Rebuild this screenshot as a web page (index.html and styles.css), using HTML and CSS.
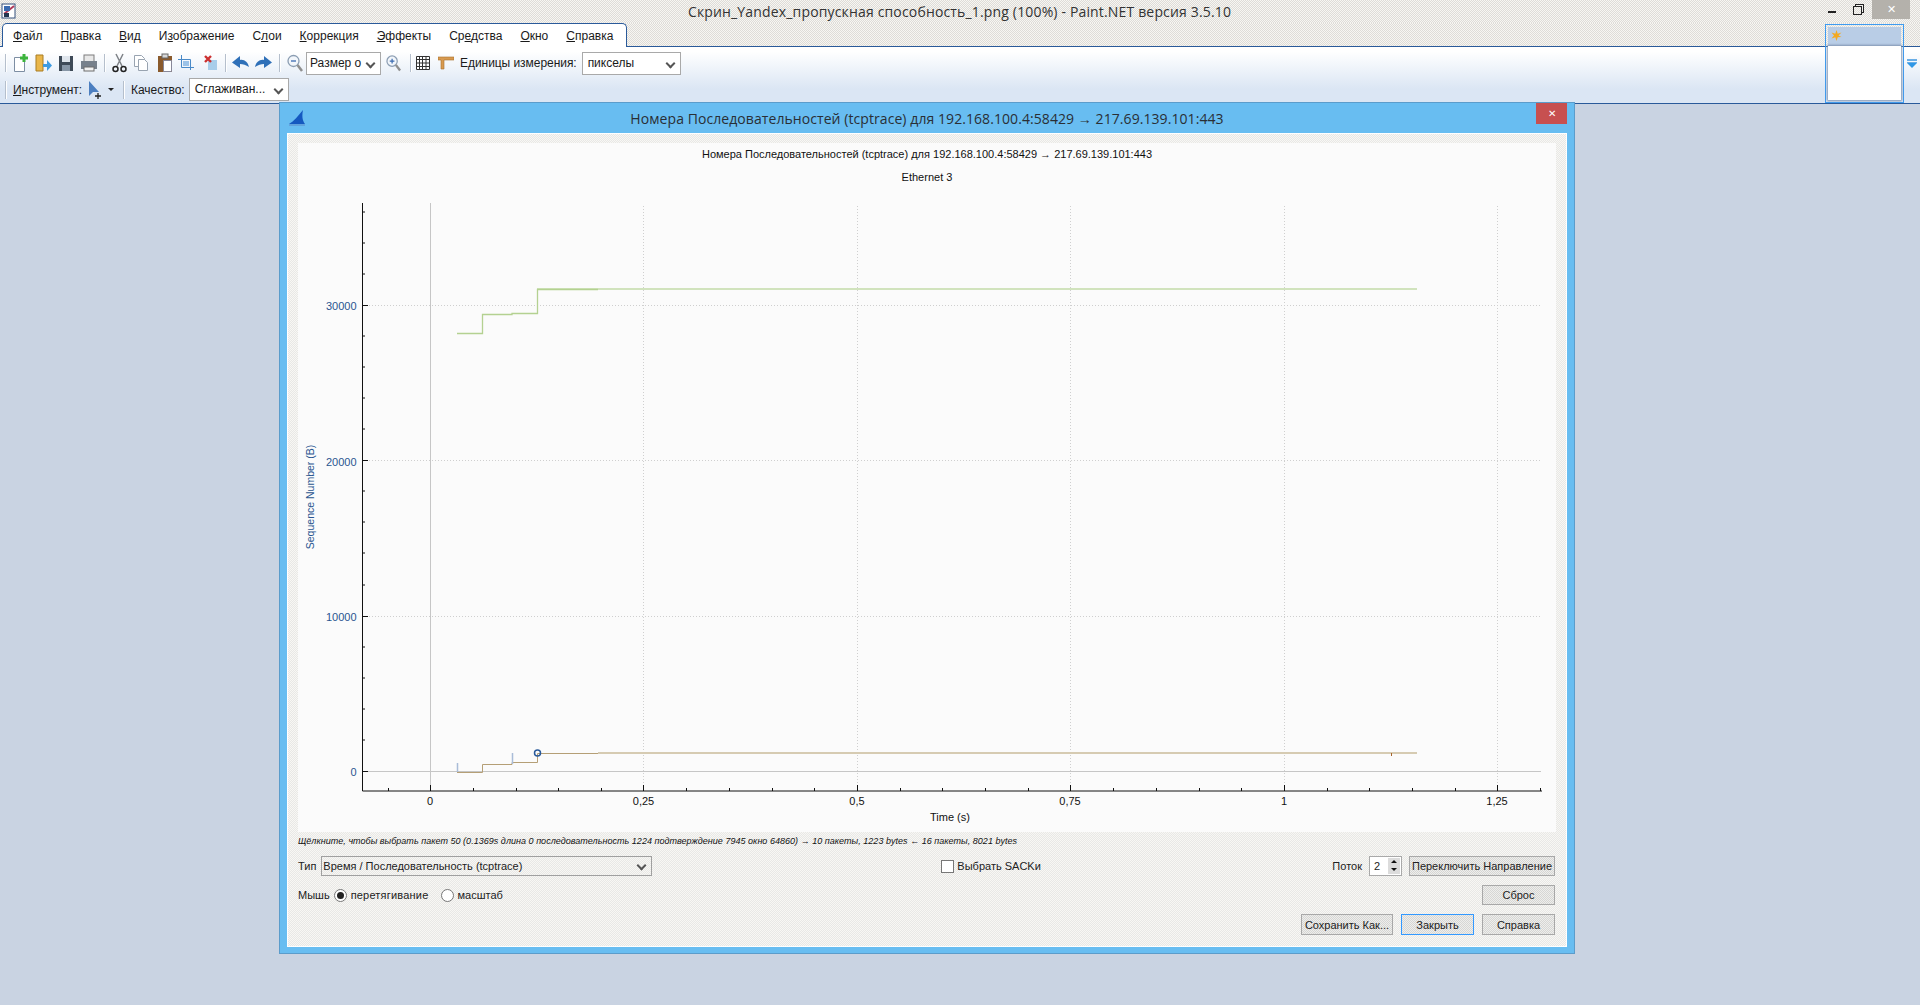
FILE: index.html
```html
<!DOCTYPE html>
<html lang="ru">
<head>
    <meta charset="UTF-8">
    <title>Paint.NET</title>
    <link rel="stylesheet" href="styles.css">
</head>
<body>

    <!-- window frame -->
    <header class="titlebar">
        <svg class="app-icon" width="16" height="16" viewBox="0 0 16 16"><rect x="1" y="1" width="13" height="14" fill="#fff" stroke="#34507c"/><path d="M3 11 L13 3" stroke="#b03a5a" stroke-width="2"/><rect x="3" y="3" width="6" height="5" fill="#3a6ab0"/><rect x="3" y="10" width="5" height="4" fill="#22344f"/></svg>
        <span class="titlebar-text">Скрин_Yandex_пропускная способность_1.png (100%) - Paint.NET версия 3.5.10</span>
        <div class="win-controls">
            <span class="win-min"></span>
            <span class="win-restore"></span>
            <span class="win-close">✕</span>
        </div>
    </header>

    <nav class="menu-row">
        <ul class="menu">
            <li><u>Ф</u>айл</li>
            <li><u>П</u>равка</li>
            <li><u>В</u>ид</li>
            <li>И<u>з</u>ображение</li>
            <li>С<u>л</u>ои</li>
            <li><u>К</u>оррекция</li>
            <li><u>Э</u>ффекты</li>
            <li>Ср<u>е</u>дства</li>
            <li><u>О</u>кно</li>
            <li><u>С</u>правка</li>
        </ul>
    </nav>

    <section class="toolbars">
        <div class="tool-row">
            <i class="sep"></i>
            <svg class="ic" width="16" height="20" viewBox="0 0 16 20"><path d="M1.500 4.500h10v14h-10z" fill="#fff" stroke="#7d8ea3"/><path d="M11 1v8M7 5h8" stroke="#3cb43c" stroke-width="3"/></svg>
            <svg class="ic" width="17" height="20" viewBox="0 0 17 20"><path d="M1 2h7v16H1z" fill="#e9b64a" stroke="#a97d22"/><path d="M8 11h4V7l5 5.500-5 5.500v-4H8z" fill="#3f9be0"/></svg>
            <svg class="ic" width="16" height="20" viewBox="0 0 16 20"><rect x="1" y="3" width="14" height="15" fill="#3e4a57"/><rect x="4" y="3" width="8" height="6" fill="#dfe5ec"/><rect x="4" y="12" width="8" height="6" fill="#8796a6"/></svg>
            <svg class="ic" width="18" height="20" viewBox="0 0 18 20"><rect x="4" y="2" width="10" height="8" fill="#e8e8e8" stroke="#7d7d7d"/><rect x="1" y="8" width="16" height="8" fill="#77818c"/><rect x="4" y="14" width="10" height="4" fill="#f2f2f2" stroke="#6d6d6d"/></svg>
            <i class="sep"></i>
            <svg class="ic" width="15" height="20" viewBox="0 0 15 20"><path d="M4 1l6 12M11 1L5 13" stroke="#7f8388" stroke-width="1.500" fill="none"/><circle cx="3.500" cy="16" r="2.500" fill="none" stroke="#222" stroke-width="1.500"/><circle cx="11.500" cy="16" r="2.500" fill="none" stroke="#222" stroke-width="1.500"/></svg>
            <svg class="ic" width="16" height="20" viewBox="0 0 16 20"><path d="M1.500 2.500h7l3 3v8h-10z" fill="#fff" stroke="#98a3b0"/><path d="M5.500 6.500h6l3 3v8h-9z" fill="#fff" stroke="#98a3b0"/></svg>
            <svg class="ic push3" width="14" height="20" viewBox="0 0 14 20"><rect x="0" y="3" width="14" height="16" fill="#8a5a2c"/><rect x="4" y="1" width="6" height="4" fill="#d8d8d8" stroke="#666"/><path d="M5.500 7.500h8v11h-8z" fill="#fff" stroke="#889"/></svg>
            <svg class="ic" width="16" height="20" viewBox="0 0 16 20"><path d="M0 6.500h12.500V17M3.500 2v12.500H16" fill="none" stroke="#4a8ac8"/><rect x="5" y="8" width="6" height="5" fill="#9cc3e8"/></svg>
            <svg class="ic push4" width="13" height="20" viewBox="0 0 13 20"><rect x="4" y="7" width="9" height="10" fill="#a8cdea"/><path d="M1 3l6 6M7 3L1 9" stroke="#cc3030" stroke-width="2.400"/></svg>
            <i class="sep push2"></i>
            <svg class="ic pull2" width="18" height="20" viewBox="0 0 18 20"><path d="M18 14c-1-5-5-8-9-7V3L1 9.500 9 15v-4c3 0 6 1 9 3z" fill="#2f70b8"/></svg>
            <svg class="ic" width="18" height="20" viewBox="0 0 18 20"><path d="M0 14c1-5 5-8 9-7V3l8 6.500L9 15v-4c-3 0-6 1-9 3z" fill="#2f70b8"/></svg>
            <i class="sep"></i>
            <svg class="ic" width="16" height="20" viewBox="0 0 16 20"><circle cx="6.500" cy="8" r="5.500" fill="#f2f6fb" stroke="#8b9db2" stroke-width="1.300"/><path d="M10.500 12l4.500 6" stroke="#8f8f8f" stroke-width="2.500"/><path d="M4 8h5" stroke="#3a6ab0" stroke-width="1.300"/></svg>
            <div class="combo combo-size">Размер о</div>
            <svg class="ic" width="15" height="20" viewBox="0 0 16 20"><circle cx="6.500" cy="8" r="5.500" fill="#f2f6fb" stroke="#8b9db2" stroke-width="1.300"/><path d="M10.500 12l4.500 6" stroke="#8f8f8f" stroke-width="2.500"/><path d="M4 8h5M6.500 5.500v5" stroke="#3a6ab0" stroke-width="1.300"/></svg>
            <i class="sep push3"></i>
            <svg class="ic pull2" width="14" height="20" viewBox="0 0 14 20"><path d="M.5 3.500h13v13H.5zM3.500 3.500v13M6.500 3.500v13M10 3.500v13M.5 6.500h13M.5 10h13M.5 13.500h13" fill="#fff" stroke="#333"/></svg>
            <svg class="ic push2" width="16" height="20" viewBox="0 0 16 20"><path d="M0 4h16v3H6v9H3V7H0z" fill="#d89a50" stroke="#a86e2c" stroke-width=".6"/></svg>
            <span class="tool-label">Единицы измерения:</span>
            <div class="combo combo-units">пикселы</div>
        </div>
        <div class="tool-row">
            <i class="sep"></i>
            <span class="tool-label"><u>И</u>нструмент:</span>
            <svg class="ic" width="14" height="20" viewBox="0 0 14 20"><path d="M1 1v15l4-4h6z" fill="#4c7fc0"/><path d="M10 13v6M7 16h6" stroke="#222" stroke-width="1.300"/></svg>
            <span class="caret"></span>
            <i class="sep"></i>
            <span class="tool-label">Качество:</span>
            <div class="combo combo-quality">Сглаживан...</div>
        </div>
    </section>

    <!-- floating thumbnails -->
    <div class="thumb">
        <div class="thumb-head"><svg width="11" height="11" viewBox="0 0 11 11"><path d="M5.500 0l1.200 3.800L10.500 2.500 7.500 5.500l3 1.500-3.800.3L5.500 11 4.300 7.300.5 8.500l2.500-3L.5 2.500l3.800 1.300z" fill="#f4a91f"/></svg></div>
        <div class="thumb-page"></div>
    </div>
    <svg class="chevron" width="10" height="9" viewBox="0 0 10 9"><path d="M0 0h10v2H0zM0 3h10v1H0z" fill="#6aaee6"/><path d="M0 4h10L5 9z" fill="#2f97e6"/></svg>

    <main class="workspace">
        <div class="dialog">
            <div class="dialog-title">
                <svg class="shark" width="18" height="16" viewBox="0 0 18 16"><path d="M1 14C6 11 10 6 15 0c-1 5-1 10 2 14z" fill="#1559c0"/><path d="M1 15h16" stroke="#5b88c8"/></svg>
                <span>Номера Последовательностей (tcptrace) для 192.168.100.4:58429 → 217.69.139.101:443</span>
                <span class="dialog-close">✕</span>
            </div>
            <div class="dialog-body">
                <svg class="plot" width="1258" height="689" viewBox="298 143 1258 689">
                    <text class="plot-title" x="927" y="158">Номера Последовательностей (tcptrace) для 192.168.100.4:58429 → 217.69.139.101:443</text>
                    <text class="plot-title" x="927" y="181">Ethernet 3</text>

                    <!-- grid -->
                    <path class="grid" d="M363 305.500H1541M363 460.500H1541M363 616.500H1541M643.500 206V790M857.500 206V790M1070.500 206V790M1284.500 206V790M1497.500 206V790"/>
                    <path class="zero" d="M363 771.500H1541M430.500 203V790"/>

                    <!-- axes -->
                    <path class="axis" d="M362.500 203V791H1542"/>
                    <path class="axis" d="M362 212H365M362 243H365M362 274H365M362 336H365M362 367H365M362 398H365M362 429H365M362 491H365M362 522H365M362 553H365M362 585H365M362 647H365M362 678H365M362 709H365M362 740H365"/>
                    <path class="axis" d="M362 305.500H368M362 460.500H368M362 616.500H368M362 771.500H368"/>
                    <path class="axis" d="M388.500 791V788M473.500 791V788M516.500 791V788M558.500 791V788M601.500 791V788M686.500 791V788M729.500 791V788M772.500 791V788M814.500 791V788M900.500 791V788M942.500 791V788M985.500 791V788M1028.500 791V788M1113.500 791V788M1156.500 791V788M1199.500 791V788M1241.500 791V788M1327.500 791V788M1369.500 791V788M1412.500 791V788M1455.500 791V788M1540.500 791V788"/>
                    <path class="axis" d="M430.500 791V785M643.500 791V785M857.500 791V785M1070.500 791V785M1284.500 791V785M1497.500 791V785"/>

                    <!-- series -->
                    <path class="win-band" d="M537 289H1417"/>
                    <path class="win-line" d="M457 333.500H482.500V314.500H512V313.500H537.500V289.500H598"/>
                    <path class="seq-band" d="M598 753H1417"/>
                    <path class="seq-line" d="M457 772.500H482.500V764.500H512V762.500H537.500V753.500H598"/>
                    <path class="ack-tick" d="M457.500 763V772M512.500 753V764"/>
                    <path class="seq-tick" d="M1391.500 753V756"/>
                    <circle class="marker" cx="537.500" cy="753" r="3"/>

                    <!-- labels -->
                    <text class="y-num" x="356.500" y="310">30000</text>
                    <text class="y-num" x="356.500" y="466">20000</text>
                    <text class="y-num" x="356.500" y="621">10000</text>
                    <text class="y-num" x="356.500" y="776">0</text>
                    <text class="y-title" transform="translate(314 497) rotate(-90)">Sequence Number (B)</text>
                    <text class="x-num" x="430" y="805">0</text>
                    <text class="x-num" x="643.500" y="805">0,25</text>
                    <text class="x-num" x="857" y="805">0,5</text>
                    <text class="x-num" x="1070" y="805">0,75</text>
                    <text class="x-num" x="1284" y="805">1</text>
                    <text class="x-num" x="1497" y="805">1,25</text>
                    <text class="x-num" x="950" y="821">Time (s)</text>
                </svg>

                <p class="hint">Щёлкните, чтобы выбрать пакет 50 (0.1369s длина 0 последовательность 1224 подтверждение 7945 окно 64860) → 10 пакеты, 1223 bytes ← 16 пакеты, 8021 bytes</p>

                <div class="ctrl-row ctrl-row1">
                    <span class="ctrl-label">Тип</span>
                    <div class="combo combo-type">Время / Последовательность (tcptrace)</div>
                    <span class="check"></span>
                    <span>Выбрать SACKи</span>
                    <span class="ctrl-stream">Поток</span>
                    <div class="spin"><span>2</span><span class="spin-btns"><b></b><b></b></span></div>
                    <button class="btn btn-switch">Переключить Направление</button>
                </div>

                <div class="ctrl-row ctrl-row2">
                    <span class="ctrl-label">Мышь</span>
                    <span class="radio radio-on"></span>
                    <span class="radio-text">перетягивание</span>
                    <span class="radio radio-two"></span>
                    <span>масштаб</span>
                    <button class="btn btn-small btn-right">Сброс</button>
                </div>

                <div class="ctrl-row ctrl-row3">
                    <button class="btn btn-save btn-right">Сохранить Как...</button>
                    <button class="btn btn-small btn-focus">Закрыть</button>
                    <button class="btn btn-small">Справка</button>
                </div>
            </div>
        </div>
    </main>

</body>
</html>
```

FILE: styles.css
```css
* {
    box-sizing: border-box;
}

body {
    margin: 0;
    height: 1005px;
    overflow: hidden;
    font-family: "Liberation Sans", Arial, sans-serif;
    font-size: 12px;
    color: #1a1a1a;
    background: #c9d3e2;
    display: flex;
    flex-direction: column;
    position: relative;
}

/* title bar + menu share the dithered frame colour */
.titlebar {
    height: 23px;
    flex: none;
    display: flex;
    align-items: center;
    justify-content: center;
    position: relative;
    background: #f1f0ec;
    background-image: repeating-conic-gradient(#dedcd8 0 25%, #f7f6f2 0 50%);
    background-size: 2px 2px;
}

.app-icon {
    position: absolute;
    left: 1px;
    top: 3px;
}

.titlebar-text {
    font-family: "Open Sans", sans-serif;
    font-size: 14px;
    color: #333;
    margin-left: -1px;
    letter-spacing: .16px;
}

.win-controls {
    position: absolute;
    right: 10px;
    top: 0;
    display: flex;
    align-items: flex-start;
}

.win-min {
    width: 8px;
    height: 2px;
    background: #222;
    margin: 11px 17px 0 0;
}

.win-restore {
    width: 9px;
    height: 9px;
    border: 1px solid #222;
    box-shadow: 2px -2px 0 -1px #f1f0ec, 2px -2px 0 0 #222;
    margin: 6px 10px 0 0;
}

.win-close {
    width: 38px;
    height: 19px;
    background: #b4b1ab;
    color: #fff;
    text-align: center;
    font-size: 11px;
    line-height: 19px;
}

.menu-row {
    height: 24px;
    flex: none;
    padding-left: 2px;
    background: #f1f0ec;
    background-image: repeating-conic-gradient(#dedcd8 0 25%, #f7f6f2 0 50%);
    background-size: 2px 2px;
    border-bottom: 1px solid #2a5a9a;
}

.menu {
    list-style: none;
    margin: 0;
    padding: 0 10px;
    width: 625px;
    height: 24px;
    display: flex;
    gap: 18px;
    align-items: center;
    background: #fff;
    border: 1px solid #2a5a9a;
    border-bottom: none;
    border-radius: 5px 5px 0 0;
    position: relative;
    z-index: 1;
}

.toolbars {
    height: 57px;
    flex: none;
    background: linear-gradient(#fff 0, #fff 8%, #dbe6f4 75%, #dbe6f4 100%);
    border-bottom: 1px solid #2a5a9a;
    display: flex;
    flex-direction: column;
}

.tool-row {
    height: 27px;
    margin-top: 3px;
    display: flex;
    align-items: center;
    padding-left: 5px;
    gap: 6px;
}

.tool-row + .tool-row {
    margin-top: 0;
}

.sep {
    width: 2px;
    height: 18px;
    background: #fff;
    border-left: 1px solid #b5bfcc;
}

.ic {
    flex: none;
}

.push2 {
    margin-left: 2px;
}

.push3 {
    margin-left: 3px;
}

.push4 {
    margin-left: 4px;
}

.pull2 {
    margin-left: -2px;
}

.tool-label {
    font-size: 12px;
    white-space: nowrap;
    letter-spacing: -.05px;
}

.combo {
    height: 23px;
    flex: none;
    padding-left: 3px;
    line-height: 21px;
    background: #fff;
    border: 1px solid #a9a9a9;
    position: relative;
    overflow: hidden;
}

.combo::after {
    content: "";
    position: absolute;
    right: 6px;
    top: 7px;
    width: 5px;
    height: 5px;
    border-right: 2px solid #555;
    border-bottom: 2px solid #555;
    transform: rotate(45deg);
}

.combo-size {
    width: 75px;
    margin: 0 -1px 0 -3px;
}

.combo-units {
    width: 99px;
    margin-left: -1px;
    padding-left: 5px;
}

.combo-quality {
    width: 100px;
    margin-left: -2px;
    padding-left: 5px;
}

.caret {
    width: 0;
    height: 0;
    margin-right: 3px;
    border: 3px solid transparent;
    border-top: 3px solid #222;
    border-bottom: none;
}

.thumb {
    position: absolute;
    left: 1825px;
    top: 24px;
    width: 79px;
    height: 79px;
    border: 1px solid #3d9bf0;
    padding: 2px;
    z-index: 3;
}

.thumb-head {
    height: 19px;
    background: #b9cde6;
    padding: 3px 0 0 3px;
}

.thumb-head svg {
    display: block;
}

.thumb-page {
    height: 54px;
    background: #fff;
    box-shadow: 0 0 2px 1px #7f93b0;
}

.chevron {
    position: absolute;
    left: 1907px;
    top: 59px;
}

.workspace {
    flex: 1;
    padding-left: 279px;
}

.dialog {
    width: 1296px;
    height: 852px;
    margin-top: -2px;
    position: relative;
    z-index: 2;
    background: #68bdf1;
    border: 1px solid #5b9ccb;
    padding: 0 7px 7px;
}

.dialog-title {
    height: 30px;
    display: flex;
    align-items: center;
    justify-content: center;
    position: relative;
    font-family: "Open Sans", sans-serif;
    font-size: 14px;
    color: #2a2f35;
    letter-spacing: .07px;
}

.shark {
    position: absolute;
    left: 1px;
    top: 7px;
}

.dialog-close {
    position: absolute;
    right: 0;
    top: 0;
    width: 31px;
    height: 21px;
    background: #c75050;
    color: #fff;
    font-size: 10px;
    line-height: 21px;
    text-align: center;
    letter-spacing: 0;
}

.dialog-body {
    height: 814px;
    padding: 9px 11px 0 10px;
    background: #f0f0ec;
    background-image: repeating-conic-gradient(#e8e8e6 0 25%, #f8f7f4 0 50%);
    background-size: 2px 2px;
    border: 1px solid #fff;
    font-size: 11px;
    color: #222;
}

.plot {
    display: block;
    background: #fbfbfb;
}

.plot text {
    font-family: "Liberation Sans", Arial, sans-serif;
    font-size: 11px;
    fill: #111;
}

.plot .plot-title,
.plot .x-num {
    text-anchor: middle;
}

.plot .y-num {
    text-anchor: end;
    fill: #2a5590;
}

.plot .y-title {
    text-anchor: middle;
    fill: #2a5590;
    font-size: 10.500px;
}

.grid {
    fill: none;
    stroke: #cfcfcf;
    stroke-dasharray: 1 2;
}

.zero {
    fill: none;
    stroke: #c6c6c6;
}

.axis {
    fill: none;
    stroke: #111;
}

.win-line {
    fill: none;
    stroke: #b4d191;
    stroke-width: 1.300;
}

.win-band {
    fill: none;
    stroke: #c3dba8;
    stroke-width: 1.500;
}

.seq-line {
    fill: none;
    stroke: #b59f76;
}

.seq-band {
    fill: none;
    stroke: #d6cbb2;
    stroke-width: 2;
}

.ack-tick {
    fill: none;
    stroke: #a9bcd8;
    stroke-width: 1.500;
}

.seq-tick {
    fill: none;
    stroke: #a5632a;
}

.marker {
    fill: none;
    stroke: #2a5a9a;
    stroke-width: 1.500;
}

.hint {
    margin: 3px 0 0;
    height: 13px;
    font-style: italic;
    font-size: 9px;
    letter-spacing: .03px;
    line-height: 13px;
    white-space: nowrap;
    color: #111;
}

.ctrl-row {
    display: flex;
    align-items: center;
    height: 20px;
}

.ctrl-row1 {
    margin-top: 8px;
}

.ctrl-row2 {
    margin-top: 9px;
}

.ctrl-row3 {
    margin-top: 9px;
    height: 21px;
}

.ctrl-label {
    margin-right: 5px;
}

.combo-type {
    width: 331px;
    height: 20px;
    line-height: 18px;
    padding-left: 1px;
    background: transparent;
    border-color: #a0a0a0;
}

.combo-type::after {
    top: 5px;
}

.check {
    width: 13px;
    height: 13px;
    margin: 0 3px 0 289px;
    background: #fff;
    border: 1px solid #777;
}

.ctrl-stream {
    margin-left: auto;
    margin-right: 7px;
}

.spin {
    width: 33px;
    height: 20px;
    border: 1px solid #a9a9a9;
    background: #fff;
    padding-left: 4px;
    line-height: 18px;
    position: relative;
    margin-right: 7px;
}

.spin-btns {
    position: absolute;
    right: 1px;
    top: 1px;
    bottom: 1px;
    width: 12px;
    display: flex;
    flex-direction: column;
    background: #dcdcdc;
}

.spin-btns b {
    flex: 1;
    position: relative;
}

.spin-btns b::after {
    content: "";
    position: absolute;
    left: 3px;
    top: 2px;
    border: 3px solid transparent;
    border-bottom: 3px solid #111;
    border-top: none;
}

.spin-btns b + b::after {
    border-top: 3px solid #111;
    border-bottom: none;
    top: 2px;
}

.radio {
    width: 13px;
    height: 13px;
    border-radius: 50%;
    background: #fff;
    border: 1px solid #777;
    margin: 0 4px 0 0;
    position: relative;
}

.radio-on {
    margin-left: -1px;
}

.radio-on::after {
    content: "";
    position: absolute;
    left: 2px;
    top: 2px;
    width: 7px;
    height: 7px;
    border-radius: 50%;
    background: #222;
}

.radio-text {
    letter-spacing: .2px;
}

.radio-two {
    margin-left: 12px;
}

.btn {
    height: 100%;
    padding: 0;
    font-family: inherit;
    font-size: 11px;
    color: #222;
    background: #e6e6e4;
    background-image: repeating-conic-gradient(#d6d6d4 0 25%, #eeeeec 0 50%);
    background-size: 2px 2px;
    border: 1px solid #a8a8a8;
}

.btn-switch {
    width: 146px;
}

.btn-small {
    width: 73px;
}

.btn-save {
    width: 92px;
    margin-right: 8px;
}

.btn-focus {
    margin-right: 8px;
    border-color: #3399ff;
}

.btn-right {
    margin-left: auto;
}
```
